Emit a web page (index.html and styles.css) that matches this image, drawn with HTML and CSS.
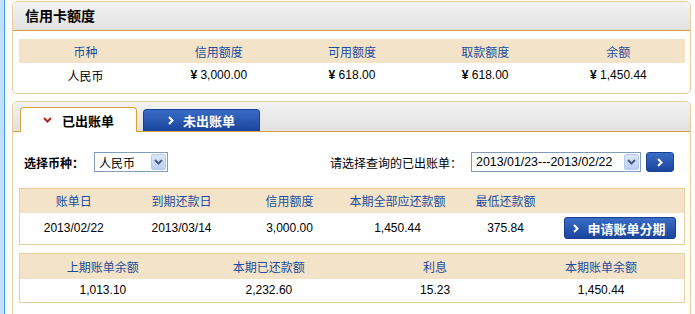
FILE: index.html
```html
<!DOCTYPE html>
<html>
<head>
  <meta charset="utf-8">
  <link rel="stylesheet" href="styles.css">
</head>
<body>
  <div class="page">
    <div class="panel">
      <div class="panel-head">
        <h2 class="panel-title">信用卡额度</h2>
      </div>
      <div class="panel-body quota-body">
        <table class="grid plain">
          <tr class="head">
            <th>币种</th><th>信用额度</th><th>可用额度</th><th>取款额度</th><th>余额</th>
          </tr>
          <tr>
            <td>人民币</td>
            <td><b class="yen">¥</b> 3,000.00</td>
            <td><b class="yen">¥</b> 618.00</td>
            <td><b class="yen">¥</b> 618.00</td>
            <td><b class="yen">¥</b> 1,450.44</td>
          </tr>
        </table>
      </div>
    </div>

    <div class="panel bill-panel">
      <div class="panel-head tabs">
        <div class="tab active">
          <svg class="tab-icon" width="9" height="6" viewBox="0 0 9 6"><path d="M1 1L4.5 4.5L8 1" fill="none" stroke="#b3221b" stroke-width="2"/></svg>
          已出账单
        </div>
        <div class="tab">
          <svg class="tab-icon" width="6" height="9" viewBox="0 0 6 9"><path d="M1 1L4.5 4.5L1 8" fill="none" stroke="#fff" stroke-width="2"/></svg>
          未出账单
        </div>
      </div>
      <div class="panel-body bill-body">
        <div class="filter">
          <span class="filter-label">选择币种：</span>
          <div class="select currency">
            <span class="select-text">人民币</span>
            <span class="select-arrow"><svg width="9" height="6" viewBox="0 0 9 6"><path d="M1 1L4.5 4.5L8 1" fill="none" stroke="#4b5d80" stroke-width="2"/></svg></span>
          </div>
          <span class="filter-query">请选择查询的已出账单：</span>
          <div class="select period">
            <span class="select-text">2013/01/23---2013/02/22</span>
            <span class="select-arrow"><svg width="9" height="6" viewBox="0 0 9 6"><path d="M1 1L4.5 4.5L8 1" fill="none" stroke="#4b5d80" stroke-width="2"/></svg></span>
          </div>
          <div class="go-btn"><svg width="6" height="9" viewBox="0 0 6 9"><path d="M1 1L4.5 4.5L1 8" fill="none" stroke="#fff" stroke-width="2"/></svg></div>
        </div>

        <table class="grid boxed bill-table">
          <colgroup>
            <col style="width:108px"><col style="width:108px"><col style="width:108px"><col style="width:108px"><col style="width:108px"><col>
          </colgroup>
          <tr class="head">
            <th>账单日</th><th>到期还款日</th><th>信用额度</th><th>本期全部应还款额</th><th>最低还款额</th><th></th>
          </tr>
          <tr class="tall">
            <td>2013/02/22</td>
            <td>2013/03/14</td>
            <td>3,000.00</td>
            <td>1,450.44</td>
            <td>375.84</td>
            <td>
              <div class="split-btn">
                <svg width="6" height="9" viewBox="0 0 6 9"><path d="M1 1L4.5 4.5L1 8" fill="none" stroke="#fff" stroke-width="2"/></svg>
                申请账单分期
              </div>
            </td>
          </tr>
        </table>

        <table class="grid boxed summary-table">
          <tr class="head">
            <th>上期账单余额</th><th>本期已还款额</th><th>利息</th><th>本期账单余额</th>
          </tr>
          <tr>
            <td>1,013.10</td>
            <td>2,232.60</td>
            <td>15.23</td>
            <td>1,450.44</td>
          </tr>
        </table>
      </div>
    </div>
  </div>
</body>
</html>
```

FILE: styles.css
```css
* {
  margin: 0;
  padding: 0;
  box-sizing: border-box;
}

body {
  background: #fff;
  border-left: 4px solid #c3e0fa;
  font-family: "Liberation Sans", "Noto Sans CJK SC", sans-serif;
  font-size: 12px;
  color: #000;
  height: 314px;
  overflow: hidden;
}

.page {
  border-left: 1px solid #44a0ec;
  padding: 1px 4px 0 7px;
  height: 100%;
}

.panel {
  width: 679px;
  border: 1px solid #e6cf9d;
  border-radius: 5px;
  overflow: hidden;
}

.panel-head {
  height: 29px;
  background: linear-gradient(#f3f3f3, #e1e1e1);
  border-bottom: 1px solid #d89f3a;
}

.panel-title {
  font-size: 14px;
  font-weight: bold;
  line-height: 28px;
  padding-left: 12px;
}

.panel-body {
  padding: 0 5px 0 6px;
}

.quota-body {
  padding-top: 8px;
  padding-bottom: 6px;
}

.grid {
  width: 100%;
  border-collapse: collapse;
  table-layout: fixed;
}

.grid th {
  font-weight: normal;
  color: #1b4c9e;
  background: #f3e4c9;
  height: 24px;
  text-align: center;
}

.grid td {
  height: 24px;
  text-align: center;
}

.yen {
  font-weight: bold;
}

.boxed {
  border: 1px solid #e6cf9d;
}

.bill-panel {
  margin-top: 7px;
  height: 240px;
}

.tabs {
  display: flex;
  align-items: flex-end;
  gap: 6px;
  padding-left: 7px;
  height: 30px;
}

.tab {
  width: 117px;
  height: 22px;
  display: flex;
  align-items: center;
  justify-content: center;
  gap: 9px;
  font-size: 13px;
  font-weight: bold;
  color: #fff;
  background: linear-gradient(#3a6dc6, #1a449d);
  border: 1px solid #17418f;
  border-bottom: none;
  border-radius: 4px 4px 0 0;
}

.tab.active {
  height: 25px;
  margin-bottom: -1px;
  gap: 10px;
  color: #000;
  background: #fff;
  border-color: #d89f3a;
}

.bill-body {
  padding-top: 20px;
}

.filter {
  display: flex;
  align-items: center;
  height: 20px;
}

.filter-label {
  font-weight: bold;
  padding-left: 5px;
  width: 75px;
}

.select {
  height: 20px;
  border: 1px solid #7f9db9;
  display: flex;
  align-items: center;
  justify-content: space-between;
  padding: 0 1px 0 4px;
  background: #fff;
}

.currency {
  width: 74px;
}

.period {
  width: 170px;
  font-size: 12.4px;
}

.select-arrow {
  width: 15px;
  height: 16px;
  border-radius: 2px;
  background: linear-gradient(#dbe7fb, #b9cff5);
  border: 1px solid #b7c9ea;
  display: flex;
  align-items: center;
  justify-content: center;
}

.filter-query {
  margin-left: 162px;
  width: 141px;
}

.go-btn {
  margin-left: 5px;
  width: 28px;
  height: 20px;
  border-radius: 3px;
  background: linear-gradient(#3a6dc6, #1a449d);
  border: 1px solid #17418f;
  display: flex;
  align-items: center;
  justify-content: center;
}

.bill-table {
  margin-top: 16px;
}

.bill-table .tall td {
  height: 32px;
}

.split-btn {
  width: 112px;
  height: 22px;
  margin-left: 4px;
  border-radius: 3px;
  background: linear-gradient(#3a6dc6, #1a449d);
  border: 1px solid #17418f;
  color: #fff;
  font-size: 13px;
  font-weight: bold;
  display: flex;
  align-items: center;
  justify-content: center;
  gap: 8px;
}

.summary-table {
  margin-top: 8px;
}

.summary-table th {
  height: 25px;
}
```
